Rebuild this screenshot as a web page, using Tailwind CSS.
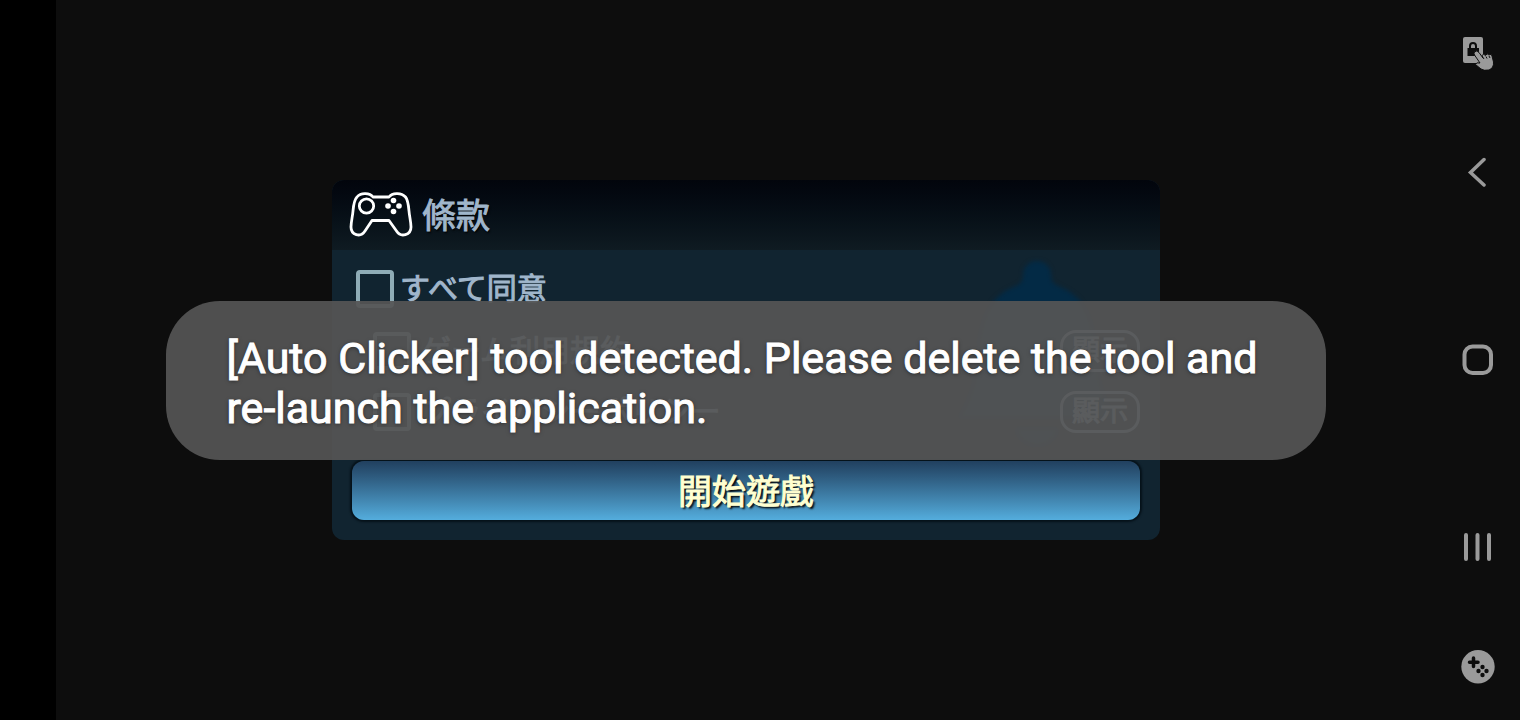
<!DOCTYPE html>
<html lang="zh-Hant">
<head>
    <meta charset="UTF-8">
    <meta name="viewport" content="width=device-width, initial-scale=1.0">
    <title>條款</title>
    <script src="https://cdn.jsdelivr.net/npm/@tailwindcss/browser@4"></script>
</head>
<body class="flex min-h-screen bg-[#0d0d0d] font-['Roboto','Noto_Sans_CJK_TC',sans-serif]">
    <!-- Camera cutout strip -->
    <div class="w-14 shrink-0 bg-black"></div>

    <!-- Game area -->
    <main class="relative flex flex-1 items-center justify-center [-webkit-text-stroke:1px]">
        <!-- Terms dialog -->
        <section class="relative w-3/5 overflow-hidden rounded-xl bg-[#112430] text-[#a0b6cb]">
            <header class="flex h-[70px] items-center gap-2 bg-linear-to-b from-[#02050c] to-[#0f1b22] px-4">
                <svg class="h-12 w-[66px]" viewBox="0 0 66 48" fill="none" stroke="#fff" stroke-width="2.800" stroke-linejoin="round">
                    <path d="M25 6H41C44 2 53 1 57.500 6C60 9 60.500 14 61 20C61.500 26 63 31 63 36C63 44 53 47 48.500 40L41 29.500H24L17 40C12.500 47 3 44 3 36C3 31 4.500 26 5 20C5.500 14 6 9 9 6C13 1 22 2 25 6Z"/>
                    <circle cx="18.500" cy="15" r="7.200"/>
                    <g fill="#fff" stroke="none">
                        <circle cx="45.500" cy="9.500" r="2.800"/>
                        <circle cx="45.500" cy="20.500" r="2.800"/>
                        <circle cx="40" cy="15" r="2.800"/>
                        <circle cx="51" cy="15" r="2.800"/>
                    </g>
                </svg>
                <h1 class="pt-0.5 text-[34px] leading-10 text-shadow-[1px_2px_2px_#000]">條款</h1>
            </header>

            <!-- Bell behind the rows -->
            <svg class="absolute top-20 right-8 h-[200px] w-[180px] blur-[2px]" viewBox="0 0 180 200" fill="#032a45">
                <path d="M89 1A14 14 0 0 1 103 15C103 20 104 23 110 26C136 36 146 58 148 88C150 120 156 140 168 158H10C22 140 28 120 30 88C32 58 42 36 68 26C74 23 75 20 75 15A14 14 0 0 1 89 1Z"/>
                <path d="M68 168H110A21 18 0 0 1 68 168Z"/>
            </svg>

            <form class="relative px-5 pb-5 text-[30px] leading-10">
                <div class="flex h-[78px] items-center gap-1.5 px-1">
                    <input type="checkbox" id="agreeAll" class="size-[38px] appearance-none rounded-sm border-4 border-[#8facb6]">
                    <label for="agreeAll">すべて同意</label>
                </div>
                <div class="-mt-2 flex h-[61px] items-center gap-2.5 pl-[21px]">
                    <input type="checkbox" id="agreeTerms" class="size-[38px] appearance-none rounded-sm border-4 border-[#8facb6]">
                    <label for="agreeTerms" class="flex-1">ゲーム利用規約</label>
                    <button type="button" class="h-[42px] w-20 rounded-2xl border-3 border-[#a0b6cb] text-[28px] leading-9">顯示</button>
                </div>
                <div class="flex h-[61px] items-center gap-2.5 pl-[21px]">
                    <input type="checkbox" id="agreePrivacy" class="size-[38px] appearance-none rounded-sm border-4 border-[#8facb6]">
                    <label for="agreePrivacy" class="flex-1">プライバシーポリシー</label>
                    <button type="button" class="h-[42px] w-20 rounded-2xl border-3 border-[#a0b6cb] text-[28px] leading-9">顯示</button>
                </div>
                <button type="button" class="mt-[19px] h-[59px] w-full rounded-xl bg-linear-to-b from-[#21405f] to-[#54addd] pt-0.5 text-[34px] text-[#ffffd0] shadow-[0_0_2px_2px_#06121a] text-shadow-[2px_2px_2px_#000]">開始遊戲</button>
            </form>
        </section>

        <!-- Toast -->
        <div role="alert" class="absolute bottom-65 w-[84%] rounded-[54px] bg-[#555]/93 px-[60px] pt-8 pb-[27px] text-[43px] leading-[50px] text-white text-shadow-[0_1px_4px_#0008]">
            [Auto Clicker] tool detected. Please delete the tool and re-launch the application.
        </div>
    </main>

    <!-- System navigation -->
    <nav class="flex w-21 shrink-0 flex-col items-center py-9 text-[#9a9a9a]">
        <button aria-label="Touch lock">
            <svg class="size-[34px]" viewBox="0 0 34 34" fill="currentColor">
                <path d="M4 1H20Q22 1 22 3V27H4Q2 27 2 25V3Q2 1 4 1Z"/>
                <path d="M6.500 12H8V10A4 4 0 0 1 16 10V12H18V20H6.500ZM10 12H14V10A2 2 0 0 0 10 10Z" fill="#0d0d0d" fill-rule="evenodd"/>
                <path d="M13.500 16Q16 13.500 18 16.500L22 22L21 19.500Q22.500 17 24.500 19.500Q26 16.500 28 19Q30.500 17 31 20L32.500 26Q33 32 28 34Q23 35 20 33L14.500 28.500Q15 26 19 27L13.500 19Q12.500 17 13.500 16Z" stroke="#0d0d0d" stroke-width="1"/>
                <path d="M22 21.500L23 23M25 20.500L26 22.500M28 20L29 22" stroke="#0d0d0d" stroke-width="1"/>
            </svg>
        </button>
        <div class="flex flex-1 flex-col items-center justify-between pt-[87px] pb-22">
            <button aria-label="Back">
                <svg class="size-[30px]" viewBox="0 0 30 30" fill="none" stroke="currentColor" stroke-width="3.500" stroke-linecap="round">
                    <path d="M21 2.500L7.500 15.500L21 28"/>
                </svg>
            </button>
            <button aria-label="Home">
                <svg class="size-[32px]" viewBox="0 0 32 32" fill="none" stroke="currentColor" stroke-width="4">
                    <rect x="2.500" y="2.500" width="26.500" height="26.500" rx="8"/>
                </svg>
            </button>
            <button aria-label="Recent apps">
                <svg class="size-[30px]" viewBox="0 0 30 30" fill="none" stroke="currentColor" stroke-width="4" stroke-linecap="round">
                    <path d="M3 3V27M14.500 3V27M26 3V27"/>
                </svg>
            </button>
        </div>
        <button aria-label="Game tools">
            <svg class="size-[34px]" viewBox="0 0 34 34">
                <circle cx="17" cy="16.700" r="16.700" fill="currentColor"/>
                <path d="M12.500 8V16.500M8.500 12.200H17" stroke="#0d0d0d" stroke-width="3.500" stroke-linecap="round"/>
                <g fill="#0d0d0d">
                    <circle cx="21.500" cy="17" r="2.200"/>
                    <circle cx="21.500" cy="25" r="2.200"/>
                    <circle cx="17.500" cy="21" r="2.200"/>
                    <circle cx="25.500" cy="21" r="2.200"/>
                </g>
            </svg>
        </button>
    </nav>
</body>
</html>
